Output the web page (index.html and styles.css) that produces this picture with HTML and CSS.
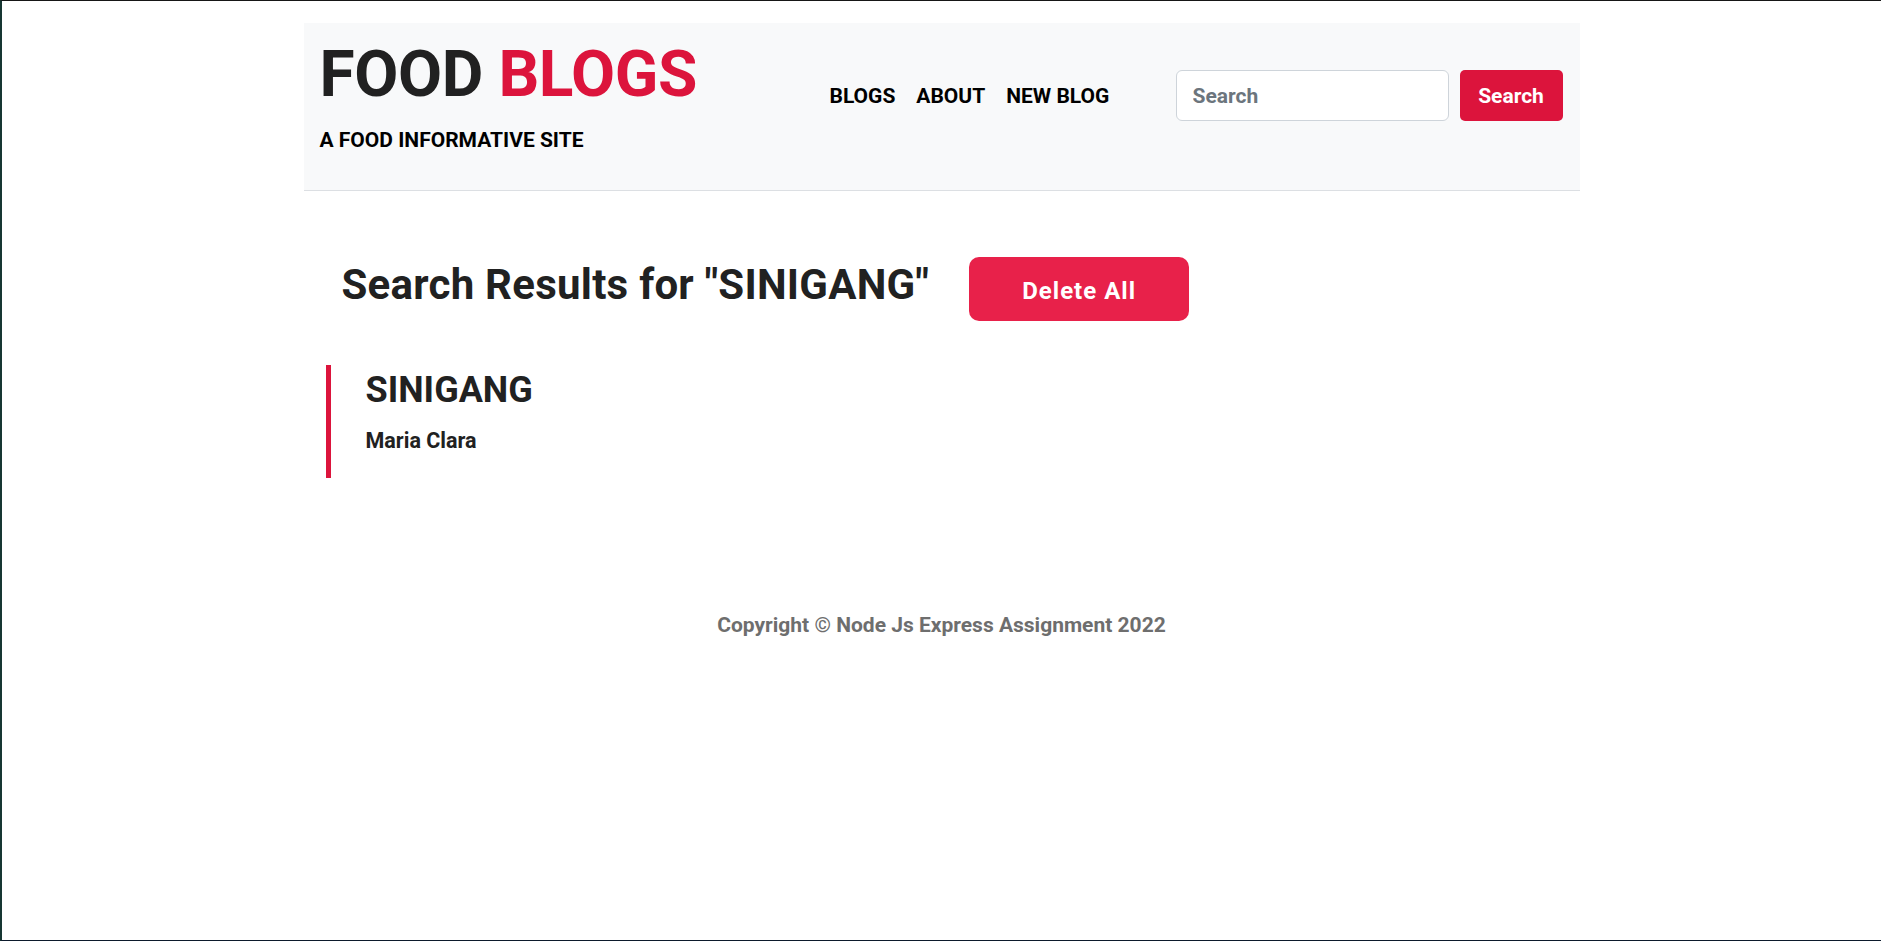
FILE: index.html
```html
<!DOCTYPE html>
<html lang="en">
<head>
<meta charset="utf-8">
<title>Food Blogs</title>
<link rel="stylesheet" href="styles.css">
</head>
<body>
<div class="frame">
  <header class="site-header">
    <div class="brand">
      <h1 class="brand-title">FOOD <span class="accent">BLOGS</span></h1>
      <p class="brand-sub">A FOOD INFORMATIVE SITE</p>
    </div>
    <div class="header-right">
      <nav class="nav">
        <a class="nav-link" href="#">BLOGS</a>
        <a class="nav-link" href="#">ABOUT</a>
        <a class="nav-link" href="#">NEW BLOG</a>
      </nav>
      <form class="search-form">
        <input class="search-input" type="text" placeholder="Search">
        <button class="search-btn" type="button">Search</button>
      </form>
    </div>
  </header>

  <main class="content">
    <div class="results-head">
      <h2 class="results-title">Search Results for "SINIGANG"</h2>
      <button class="delete-btn" type="button">Delete All</button>
    </div>
    <article class="blog-item">
      <h3 class="blog-title">SINIGANG</h3>
      <p class="blog-author">Maria Clara</p>
    </article>
  </main>

  <footer class="site-footer">Copyright © Node Js Express Assignment 2022</footer>
</div>
</body>
</html>
```
FILE: styles.css
```css
* { box-sizing: border-box; }

html, body {
  margin: 0;
  padding: 0;
  background: #ffffff;
}

body {
  font-family: Roboto, "Liberation Sans", Arial, sans-serif;
  font-weight: 700;
  color: #212121;
}

.frame {
  min-height: 100vh;
  border-top: 1px solid #161616;
  border-left: 2px solid #163632;
  border-bottom: 1px solid #0c1a2c;
  padding-top: 22px;
}

/* Header */
.site-header {
  width: 1276px;
  margin: 0 auto;
  background: #f8f9fa;
  border-bottom: 1px solid #dcdfe3;
  padding: 20px 17px 38px 16px;
  display: flex;
  align-items: flex-start;
}

.brand {
  flex: 0 0 510px;
}

.brand-title {
  margin: 0;
  font-size: 64px;
  line-height: 64px;
  font-weight: 700;
  letter-spacing: -0.4px;
  color: #212121;
}

.accent { color: #dc143c; }

.brand-sub {
  margin: 21px 0 0;
  font-size: 21px;
  line-height: 24px;
  color: #000000;
}

.header-right {
  flex: 1 1 auto;
  display: flex;
  align-items: center;
  margin-top: 27px;
}

.nav {
  display: flex;
  gap: 21px;
}

.nav-link {
  color: #000000;
  text-decoration: none;
  font-size: 21px;
  line-height: 24px;
}

.search-form {
  margin-left: auto;
  display: flex;
  gap: 11px;
}

.search-input {
  width: 273px;
  height: 51px;
  border: 1px solid #ced4da;
  border-radius: 6px;
  background: #ffffff;
  padding: 0 16px;
  font-family: Roboto, "Liberation Sans", Arial, sans-serif;
  font-weight: 700;
  font-size: 21px;
  color: #212121;
  outline: none;
}

.search-input::placeholder { color: #6c757d; }

.search-btn {
  width: 103px;
  height: 51px;
  border: none;
  border-radius: 5px;
  background: #dc143c;
  color: #ffffff;
  font-family: Roboto, "Liberation Sans", Arial, sans-serif;
  font-weight: 700;
  font-size: 21px;
  padding: 0;
}

/* Content */
.content {
  width: 1276px;
  margin: 66px auto 0;
  padding: 0 22px;
}

.results-head {
  display: flex;
  align-items: flex-start;
  gap: 40px;
  padding-left: 16px;
}

.results-title {
  margin: 3px 0 0;
  font-size: 42px;
  line-height: 50px;
  font-weight: 700;
  letter-spacing: 0.25px;
  color: #212121;
}

.delete-btn {
  width: 220px;
  height: 64px;
  border: none;
  border-radius: 10px;
  background: #e8214a;
  color: #ffffff;
  font-family: Roboto, "Liberation Sans", Arial, sans-serif;
  font-weight: 700;
  font-size: 24px;
  letter-spacing: 1px;
  padding: 3px 0 0;
}

.blog-item {
  margin-top: 44px;
  border-left: 5px solid #dc143c;
  padding: 4px 0 21px 35px;
}

.blog-title {
  margin: 0;
  font-size: 36px;
  line-height: 43px;
  font-weight: 700;
  color: #212121;
}

.blog-author {
  margin: 13px 0 0;
  font-size: 21.5px;
  line-height: 32px;
  color: #212121;
}

/* Footer */
.site-footer {
  margin-top: 132px;
  text-align: center;
  font-size: 21px;
  line-height: 31px;
  color: #6e6e6e;
}
```
